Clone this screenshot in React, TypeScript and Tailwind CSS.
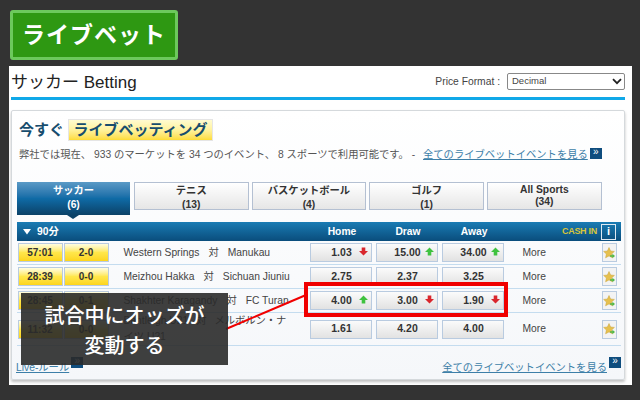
const jp = "font-['Liberation_Sans','Noto_Sans_CJK_JP',sans-serif]";

function Arrow({ up }: { up: boolean }) {
  return (
    <svg width="9" height="9" viewBox="0 0 9 9" className="absolute right-[3px] top-[3px]">
      {up ? (
        <path d="M4.5 0.5 L9 5 L6.3 5 L6.3 8.5 L2.7 8.5 L2.7 5 L0 5 Z" fill="#3fc23f" />
      ) : (
        <path d="M4.5 8.5 L9 4 L6.3 4 L6.3 0.5 L2.7 0.5 L2.7 4 L0 4 Z" fill="#d9262c" />
      )}
    </svg>
  );
}

function Odd({ v, a }: { v: string; a?: string }) {
  return (
    <div className="relative w-[62px] h-[19px] border border-[#b9cbe0] bg-gradient-to-b from-[#fbfbfb] to-[#e2e2e2] flex items-center justify-center text-[10.5px] font-bold text-[#333] pl-[2px]">
      <span>{v}</span>
      {a && <Arrow up={a === "u"} />}
    </div>
  );
}

function Star() {
  return (
    <div className="w-[15px] h-[19px] border border-[#b9cbe0] bg-[#f3f3f3] flex items-center justify-center">
      <svg width="12" height="12" viewBox="0 0 12 12">
        <path d="M6 0.5 L7.6 4 L11.4 4.4 L8.6 7 L9.4 10.8 L6 8.9 L2.6 10.8 L3.4 7 L0.6 4.4 L4.4 4 Z" fill="#e6c04e" stroke="#c9a53c" strokeWidth="0.5" />
        <path d="M7 8.2 H9.4 V6.8 L12 9 L9.4 11.2 V9.8 H7 Z" fill="#52b848" />
      </svg>
    </div>
  );
}

function Time({ t }: { t: string }) {
  return (
    <div className="w-[45px] h-[19px] border border-[#b9cbe0] bg-gradient-to-b from-[#fffde0] via-[#ffe74a] to-[#fdd51a] flex items-center justify-center text-[10px] font-bold text-[#333]">
      {t}
    </div>
  );
}

function Row({ time, score, a, vs, b, odds, h }: any) {
  return (
    <div className={`flex items-center border-b border-[#c4dcef] ${h}`}>
      <div className="flex gap-[1px] w-[106px] ml-[0.5px]">
        <Time t={time} />
        <Time t={score} />
      </div>
      <div className="w-[186px] text-[10.3px] leading-[16px] text-[#444]">
        {vs ?? (
          <span className="whitespace-nowrap">
            {a}
            <span className="mx-[9px]">対</span>
            {b}
          </span>
        )}
      </div>
      <div className="flex gap-[4px]">
        <Odd v={odds[0][0]} a={odds[0][1]} />
        <Odd v={odds[1][0]} a={odds[1][1]} />
        <Odd v={odds[2][0]} a={odds[2][1]} />
      </div>
      <div className="ml-[19px] w-[79px] text-[10.3px] text-[#444]">More</div>
      <Star />
    </div>
  );
}

function Tab({ name, n, tight }: { name: string; n: string; tight?: boolean }) {
  return (
    <div className={`w-[114.5px] h-[28px] border border-[#b4c0d2] bg-gradient-to-b from-[#ffffff] to-[#e6e6e6] flex flex-col items-center justify-center text-[10.3px] font-bold text-[#333] ${tight ? "leading-[12px]" : "leading-[14px] pt-[3px]"}`}>
      <span>{name}</span>
      <span>{n}</span>
    </div>
  );
}

function More() {
  return (
    <span className="inline-flex w-[12px] h-[11px] ml-[2px] -mt-[3px] bg-[#0f4d7e] text-white text-[10px] leading-[8px] justify-center items-start">»</span>
  );
}

export default function App() {
  return (
    <div className={`relative w-[640px] h-[400px] overflow-hidden bg-[#333333] ${jp}`}>
      <div className="pt-[10px] pl-[10px]">
        <div className="w-[168px] h-[50px] rounded-[3px] border-[3px] border-[#6cc95c] bg-[#2e9812] flex items-center justify-center text-white text-[23px] font-bold tracking-[1px]">
          ライブベット
        </div>
      </div>

      <div className="mt-[6px] ml-[9px] w-[623px] h-[319px] bg-white px-[2px]">
        <div className="flex items-center h-[31px] w-[614px]">
          <div className="text-[17px] text-[#222] leading-[20px] pt-[2px]">サッカー Betting</div>
          <div className="ml-auto flex items-center">
            <span className="text-[10.3px] text-[#444] mr-[7px]">Price Format :</span>
            <div className="w-[118px] h-[17px] border border-[#888] rounded-[2px] flex items-center justify-between pl-[4px] pr-[2px] text-[9.5px] text-[#444]">
              Decimal
              <svg width="10" height="7" viewBox="0 0 10 7">
                <path d="M1 1.2 L5 5.2 L9 1.2" fill="none" stroke="#222" strokeWidth="1.8" />
              </svg>
            </div>
          </div>
        </div>
        <div className="h-[3px] w-[614px] bg-[#10a8e8]" />

        <div className="mt-[10px] w-[614px] h-[270px] border border-[#d5d9dc] rounded-[2px] bg-gradient-to-b from-white to-[#f5f7fa] shadow-[0_2px_3px_rgba(0,0,0,0.25)] px-[5px]">
          <div className="flex items-center mt-[8px] h-[22px]">
            <span className="text-[15px] font-bold text-[#174d6e] w-[49px] ml-[2px]">今すぐ</span>
            <span className="h-[22px] w-[145px] bg-gradient-to-b from-[#fffbd0] via-[#fff29c] to-[#fedc33] border border-[#e5e5e5] text-[15px] font-bold text-[#174d6e] flex items-center justify-center whitespace-nowrap">ライブベッティング</span>
          </div>
          <div className="flex items-center mt-[6px] ml-[2px] h-[16px] text-[10.3px] text-[#555] whitespace-nowrap">
            弊社では現在、 933 のマーケットを 34 つのイベント、 8 スポーツで利用可能です。 -&nbsp;
            <span className="ml-[5px] text-[#3d7fa8] underline">全てのライブベットイベントを見る</span>
            <More />
          </div>

          <div className="flex mt-[19px] h-[29px]">
            <div className="relative w-[113px] h-[33px] bg-gradient-to-b from-[#5a9ac6] via-[#0f6ba6] to-[#0b4268] flex flex-col items-center justify-start pt-[2px] text-[10.3px] leading-[14px] font-bold text-white">
              <span>サッカー</span>
              <span>(6)</span>
              <div className="absolute left-[50px] bottom-[-4px] border-x-[6px] border-t-[4px] border-x-transparent border-t-[#0b4268]" />
            </div>
            <div className="flex gap-[3.2px] ml-[4px]">
              <Tab name="テニス" n="(13)" />
              <Tab name="バスケットボール" n="(4)" />
              <Tab name="ゴルフ" n="(1)" />
              <Tab name="All Sports" n="(34)" tight />
            </div>
          </div>

          <div className="mt-[11px] w-[604px] h-[19px] bg-gradient-to-b from-[#1a7cb4] to-[#0a4d7c] flex items-center text-white text-[10.3px] font-bold">
            <svg width="8" height="6" viewBox="0 0 8 6" className="ml-[6px] mr-[6px]"><path d="M0 0 H8 L4 5.5 Z" fill="#fff" /></svg>
            <span className="w-[272px]">90分</span>
            <span className="w-[66px] text-center">Home</span>
            <span className="w-[66px] text-center">Draw</span>
            <span className="w-[66px] text-center">Away</span>
            <span className="ml-[55px] w-[35px] text-[9px] text-[#d8c53a] tracking-[-0.3px] whitespace-nowrap">CASH IN</span>
            <span className="ml-[4px] w-[15px] h-[16px] border border-[#dfe9f2] flex items-center justify-center text-[11px]">i</span>
          </div>

          <div className="w-[604px]">
            <Row h="h-[24px]" time="57:01" score="2-0" a="Western Springs" b="Manukau" odds={[["1.03", "d"], ["15.00", "u"], ["34.00", "u"]]} />
            <Row h="h-[24px]" time="28:39" score="0-0" a="Meizhou Hakka" b="Sichuan Jiuniu" odds={[["2.75"], ["2.37"], ["3.25"]]} />
            <Row h="h-[24px]" time="28:45" score="0-1" a="Shakhter Karagandy" b="FC Turan" odds={[["4.00", "u"], ["3.00", "d"], ["1.90", "d"]]} />
            <Row h="h-[33px]" time="11:32" score="0-0" vs={<div className="w-[172px]">Bentleigh U21<span className="mx-[8px]">対</span>メルボルン・ナ<br />イツ U21</div>} odds={[["1.61"], ["4.20"], ["4.00"]]} />
          </div>

          <div className="flex justify-between items-start mt-[14px] w-[604px] text-[10.3px] text-[#3d7fa8]">
            <span className="flex items-start -ml-[1px]"><span className="underline">Live-ルール</span><More /></span>
            <span className="flex items-start"><span className="underline">全てのライブベットイベントを見る</span><More /></span>
          </div>
        </div>
      </div>

      <svg className="absolute left-0 top-0" width="640" height="400">
        <line x1="226" y1="329" x2="306" y2="295" stroke="#f00000" strokeWidth="2" />
      </svg>
      <div className="absolute left-[304px] top-[282px] w-[204px] h-[35px] border-[4px] border-[#f00000]" />
      <div className="absolute left-[21px] top-[293px] w-[207px] h-[72px] pt-[3px] bg-[rgba(42,42,42,0.9)] flex flex-col items-center justify-center text-white text-[20px] font-medium leading-[30px]">
        <span>試合中にオッズが</span>
        <span>変動する</span>
      </div>
    </div>
  );
}
